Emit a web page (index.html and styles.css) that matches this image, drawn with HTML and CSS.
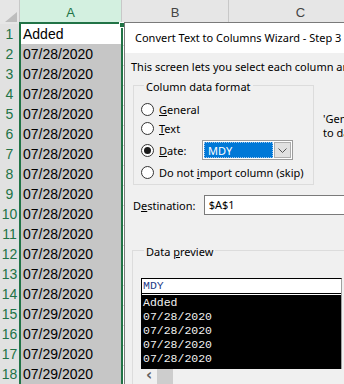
FILE: index.html
```html
<!DOCTYPE html>
<html lang="en">
<head>
<meta charset="UTF-8" />
<title>Convert Text to Columns</title>
<link rel="stylesheet" href="styles.css">
</head>
<body>
<div class="sheet">
    <div class="hdr">
        <div class="corner"><svg width="12" height="10" viewBox="0 0 12 10"><path d="M12 0 L12 10 L0 10 Z" fill="#bdbdbd"/></svg></div>
        <div class="col-h sel">A</div>
        <div class="col-h">B</div>
        <div class="col-h">C</div>
    </div>
    <div class="row"><div class="rn">1</div><div class="cell a active">Added</div><div class="cell b"></div><div class="cell"></div></div>
    <div class="row"><div class="rn">2</div><div class="cell a">07/28/2020</div><div class="cell b">07/28/2020</div><div class="cell"></div></div>
    <div class="row"><div class="rn">3</div><div class="cell a">07/28/2020</div><div class="cell b">07/28/2020</div><div class="cell"></div></div>
    <div class="row"><div class="rn">4</div><div class="cell a">07/28/2020</div><div class="cell b">07/28/2020</div><div class="cell"></div></div>
    <div class="row"><div class="rn">5</div><div class="cell a">07/28/2020</div><div class="cell b">07/28/2020</div><div class="cell"></div></div>
    <div class="row"><div class="rn">6</div><div class="cell a">07/28/2020</div><div class="cell b">07/28/2020</div><div class="cell"></div></div>
    <div class="row"><div class="rn">7</div><div class="cell a">07/28/2020</div><div class="cell b">07/28/2020</div><div class="cell"></div></div>
    <div class="row"><div class="rn">8</div><div class="cell a">07/28/2020</div><div class="cell b">07/28/2020</div><div class="cell"></div></div>
    <div class="row"><div class="rn">9</div><div class="cell a">07/28/2020</div><div class="cell b">07/28/2020</div><div class="cell"></div></div>
    <div class="row"><div class="rn">10</div><div class="cell a">07/28/2020</div><div class="cell b">07/28/2020</div><div class="cell"></div></div>
    <div class="row"><div class="rn">11</div><div class="cell a">07/28/2020</div><div class="cell b">07/28/2020</div><div class="cell"></div></div>
    <div class="row"><div class="rn">12</div><div class="cell a">07/28/2020</div><div class="cell b">07/28/2020</div><div class="cell"></div></div>
    <div class="row"><div class="rn">13</div><div class="cell a">07/28/2020</div><div class="cell b">07/28/2020</div><div class="cell"></div></div>
    <div class="row"><div class="rn">14</div><div class="cell a">07/28/2020</div><div class="cell b">07/28/2020</div><div class="cell"></div></div>
    <div class="row"><div class="rn">15</div><div class="cell a">07/29/2020</div><div class="cell b">07/29/2020</div><div class="cell"></div></div>
    <div class="row"><div class="rn">16</div><div class="cell a">07/29/2020</div><div class="cell b">07/29/2020</div><div class="cell"></div></div>
    <div class="row"><div class="rn">17</div><div class="cell a">07/29/2020</div><div class="cell b">07/29/2020</div><div class="cell"></div></div>
    <div class="row"><div class="rn">18</div><div class="cell a">07/29/2020</div><div class="cell b">07/29/2020</div><div class="cell"></div></div>

    <!-- column A selection outline -->
    <div class="selection"><span class="handle"></span></div>
</div>

<div class="dialog">
    <div class="title">Convert Text to Columns Wizard - Step 3 of 3</div>
    <div class="body">
        <div class="intro">This screen lets you select each column and set the Data Format.</div>

        <div class="format-row">
            <fieldset class="group fmt">
                <legend>Column data format</legend>
                <div class="opt"><span class="radio"></span><span><u>G</u>eneral</span></div>
                <div class="opt"><span class="radio"></span><span><u>T</u>ext</span></div>
                <div class="opt date">
                    <span class="radio on"></span>
                    <span class="date-lbl"><u>D</u>ate:</span>
                    <div class="combo">
                        <div class="combo-val">MDY</div>
                        <div class="combo-btn">
                            <svg width="9" height="5" viewBox="0 0 9 5"><path d="M0.5 0.5 L4.5 4.5 L8.5 0.5" fill="none" stroke="#555" stroke-width="1"/></svg>
                        </div>
                    </div>
                </div>
                <div class="opt skip"><span class="radio"></span><span>Do not <u>i</u>mport column (skip)</span></div>
            </fieldset>
            <div class="hint">
                <div>'General' converts numeric values to numbers, date values</div>
                <div>to dates, and all remaining values to text.</div>
            </div>
        </div>

        <div class="dest">
            <span class="dest-lbl">D<u>e</u>stination:</span>
            <div class="dest-input">$A$1</div>
        </div>

        <fieldset class="group preview-group">
            <legend>Data <u>p</u>review</legend>
            <div class="preview">
                <div class="pv-head">MDY</div>
                <div class="pv-body">
                    <div>Added</div>
                    <div>07/28/2020</div>
                    <div>07/28/2020</div>
                    <div>07/28/2020</div>
                    <div>07/28/2020</div>
                </div>
            </div>
            <div class="hscroll">
                <span class="arrow">&lsaquo;</span>
                <span class="thumb"></span>
            </div>
        </fieldset>
    </div>
</div>
</body>
</html>
```

FILE: styles.css
```css
* {
    box-sizing: border-box;
}

body {
    margin: 0;
    width: 344px;
    height: 384px;
    overflow: hidden;
    position: relative;
    background: #fff;
    font-family: "Liberation Sans", Arial, sans-serif;
}

/* ---------- spreadsheet ---------- */

.sheet {
    position: relative;
}

.hdr,
.row {
    display: grid;
    grid-template-columns: 20px 102px 107px 144px;
}

.hdr {
    height: 24px;
}

.corner {
    background: #e6e6e6;
    border-right: 1px solid #c8c8c8;
    border-bottom: 1px solid #ababab;
    display: flex;
    align-items: flex-end;
    justify-content: flex-end;
    padding: 0 2px 3px 0;
}

.col-h {
    background: #e6e6e6;
    border-right: 1px solid #c8c8c8;
    border-bottom: 1px solid #ababab;
    color: #444;
    font-size: 13px;
    line-height: 25px;
    text-align: center;
}

.col-h.sel {
    background: #d3f0e0;
    color: #217346;
}

.row {
    height: 20px;
}

.rn {
    background: #e1e1e1;
    color: #217346;
    border-bottom: 1px solid #c6c6c6;
    border-right: 1px solid #ababab;
    font-size: 14px;
    line-height: 21px;
    text-align: center;
}

.cell {
    border-bottom: 1px solid #d4d4d4;
    border-right: 1px solid #d4d4d4;
    padding-left: 3px;
    font-size: 14px;
    line-height: 21px;
    white-space: nowrap;
    overflow: hidden;
    color: #000;
}

.cell.a {
    background: #c6c6c6;
    border-color: #9e9e9e;
}

.cell.a.active {
    background: #fff;
}

.cell.b {
    padding-left: 2px;
    color: #6b4219;
}

.selection {
    position: absolute;
    left: 19px;
    top: 22px;
    width: 104px;
    height: 380px;
    border: 2px solid #217346;
}

.handle {
    position: absolute;
    right: -4px;
    top: -2px;
    width: 6px;
    height: 6px;
    background: #217346;
    border: 1px solid #fff;
}

/* ---------- wizard dialog ---------- */

.dialog {
    position: absolute;
    left: 124px;
    top: 22px;
    width: 240px;
    height: 370px;
    background: #f0f0f0;
    border: 1px solid #7a7a7a;
    font-family: "Noto Sans", "Open Sans", sans-serif;
    font-size: 11px;
    color: #000;
    white-space: nowrap;
    overflow: hidden;
}

.title {
    height: 30px;
    background: #fff;
    padding-left: 10px;
    font-size: 11px;
    line-height: 30px;
}

.body {
    padding-left: 8px;
}

.intro {
    padding-top: 7px;
    margin-left: -2px;
    line-height: 14px;
}

.format-row {
    display: flex;
    margin-top: 2px;
}

.group {
    margin: 0;
    border: 1px solid #dcdcdc;
    min-width: 0;
}

.group legend {
    padding: 4px 2px 0;
    margin-left: 3px;
    line-height: 14px;
}

.fmt {
    width: 181px;
    height: 109px;
    flex: none;
    padding: 6px 0 0 7px;
}

.opt {
    display: flex;
    align-items: center;
    gap: 5px;
    height: 19px;
}

.opt.date {
    height: 24px;
}

.opt.skip {
    height: 20px;
}

.radio {
    width: 13px;
    height: 13px;
    border: 1px solid #333;
    border-radius: 50%;
    background: #fff;
    display: flex;
    align-items: center;
    justify-content: center;
    flex: none;
}

.radio.on::after {
    content: "";
    width: 7px;
    height: 7px;
    border-radius: 50%;
    background: #1a1a1a;
}

.date-lbl {
    width: 38px;
}

.combo {
    width: 91px;
    height: 20px;
    border: 1px solid #9c9c9c;
    background: #fff;
    display: flex;
    padding: 1px;
}

.combo-val {
    flex: 1;
    background: #0078d7;
    color: #fff;
    padding-left: 3px;
    line-height: 16px;
    border: 1px dotted #9cc4ea;
}

.combo-btn {
    width: 17px;
    margin-left: 1px;
    background: #e1e1e1;
    border: 1px solid #adadad;
    display: flex;
    align-items: center;
    justify-content: center;
}

.hint {
    margin: 36px 0 0 9px;
    line-height: 14px;
}

.dest {
    display: flex;
    align-items: center;
    margin-top: 10px;
    height: 20px;
}

.dest-lbl {
    width: 71px;
}

.dest-input {
    width: 160px;
    height: 20px;
    background: #fff;
    border: 1px solid #7a7a7a;
    padding-left: 4px;
    line-height: 18px;
}

.preview-group {
    margin: 26px 0 0 -1px;
    width: 240px;
    height: 160px;
    padding: 19px 0 0 8px;
}

.preview {
    width: 201px;
    border-left: 1px solid #000;
    border-right: 1px solid #a0a0a0;
    border-top: 1px solid #000;
    font-family: "Liberation Mono", "Courier New", monospace;
    font-size: 11.5px;
}

.pv-head {
    height: 15px;
    background: #fff;
    color: #1f3c88;
    line-height: 13px;
    padding-left: 1px;
    border-bottom: 1px solid #000;
    box-shadow: 0 1px 0 #fff;
    margin-bottom: 1px;
}

.pv-body {
    background: #000;
    color: #f2f2f2;
    padding: 1px 0 3px 1px;
    line-height: 14px;
}

.hscroll {
    width: 201px;
    height: 15px;
    background: #f0f0f0;
    display: flex;
    align-items: stretch;
}

.arrow {
    width: 16px;
    text-align: center;
    color: #606060;
    font-family: "DejaVu Sans", sans-serif;
    font-size: 15px;
    font-weight: bold;
    line-height: 13px;
}

.thumb {
    width: 16px;
    background: #cdcdcd;
}
```
